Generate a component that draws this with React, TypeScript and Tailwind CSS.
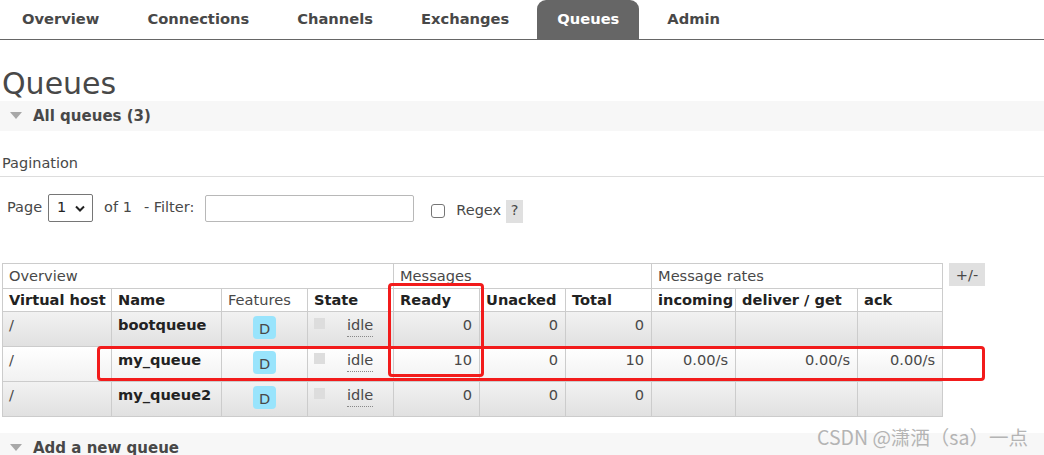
import React from "react";

const font = { fontFamily: '"DejaVu Sans", Verdana, sans-serif' };

function Triangle() {
  return (
    <svg width="12" height="8" viewBox="0 0 12 8" className="shrink-0">
      <polygon points="0,0 12,0 6,7" fill="#a8a8a8" />
    </svg>
  );
}

function SectionHeader({ title }: { title: string }) {
  return (
    <div className="h-[30px] bg-[#f7f7f7] flex items-center pl-[10px] gap-[11px]">
      <Triangle />
      <span className="text-[15px] font-bold text-[#484848]">{title}</span>
    </div>
  );
}

type Row = {
  name: string;
  ready: string;
  unacked: string;
  total: string;
  incoming: string;
  deliver: string;
  ack: string;
  odd: boolean;
};

const rows: Row[] = [
  { name: "bootqueue", ready: "0", unacked: "0", total: "0", incoming: "", deliver: "", ack: "", odd: true },
  { name: "my_queue", ready: "10", unacked: "0", total: "10", incoming: "0.00/s", deliver: "0.00/s", ack: "0.00/s", odd: false },
  { name: "my_queue2", ready: "0", unacked: "0", total: "0", incoming: "", deliver: "", ack: "", odd: true },
];

export default function App() {
  const tabs = ["Overview", "Connections", "Channels", "Exchanges", "Queues", "Admin"];
  const td = "border border-[#cccccc] align-top pt-[2px] h-[35px] px-[6px]";
  const num = td + " text-right pr-[7px]";
  return (
    <div className="relative w-[1044px] h-[455px] overflow-hidden bg-white text-[#484848]" style={font}>
      {/* nav */}
      <div className="flex gap-[8px] pl-[2px] h-[40px] border-b border-[#666666]">
        {tabs.map((t) => (
          <div
            key={t}
            className={
              "px-[20px] h-[39px] flex items-center text-[14.7px] font-bold " +
              (t === "Queues" ? "bg-[#666666] text-white rounded-t-[9px]" : "text-[#484848]")
            }
          >
            {t}
          </div>
        ))}
      </div>

      <h1 className="mt-[27px] h-[34px] leading-[34px] text-[30px] pl-[2px] text-[#484848]">Queues</h1>

      <SectionHeader title="All queues (3)" />

      <div className="pt-[22px] pb-[3px] leading-[20px] text-[14.5px] pl-[2px] border-b border-[#dddddd]">
        Pagination
      </div>

      <div className="mt-[17px] h-[28px] flex items-center text-[14.5px] pl-[7px]">
        <span>Page</span>
        <div className="ml-[6px] w-[45px] h-[28px] border border-[#767676] rounded-[2px] flex items-center pl-[8px] gap-[9px] text-[#222]">
          <span>1</span>
          <svg width="10" height="7" viewBox="0 0 10 7">
            <polyline points="1,1.5 5,5.5 9,1.5" fill="none" stroke="#222" strokeWidth="2" />
          </svg>
        </div>
        <span className="ml-[11px]">of 1</span>
        <span className="ml-[12px]">- Filter:</span>
        <div className="ml-[11px] w-[209px] h-[27px] border border-[#b8b8b8] rounded-[2px]" />
        <div className="flex items-center mt-[6px]">
          <div className="ml-[17px] w-[14px] h-[14px] border border-[#767676] rounded-[3px]" />
          <span className="ml-[11px]">Regex</span>
          <span className="ml-[5px] w-[17px] h-[23px] bg-[#e0e0e0] flex items-center justify-center">?</span>
        </div>
      </div>

      {/* table */}
      <div className="mt-[41px] ml-[2px] flex items-start gap-[6px]">
        <table className="table-fixed border-collapse w-[941px] text-[14.6px]">
          <colgroup>
            <col className="w-[109px]" />
            <col className="w-[110px]" />
            <col className="w-[86px]" />
            <col className="w-[86px]" />
            <col className="w-[86px]" />
            <col className="w-[86px]" />
            <col className="w-[86px]" />
            <col className="w-[84px]" />
            <col className="w-[122px]" />
            <col className="w-[85px]" />
          </colgroup>
          <thead>
            <tr className="h-[25px]">
              <th colSpan={4} className="border border-[#cccccc] text-left font-normal px-[6px] leading-[18px]">Overview</th>
              <th colSpan={3} className="border border-[#cccccc] text-left font-normal px-[6px] leading-[18px]">Messages</th>
              <th colSpan={3} className="border border-[#cccccc] text-left font-normal px-[6px] leading-[18px]">Message rates</th>
            </tr>
            <tr className="h-[23px] text-[#222]">
              {["Virtual host", "Name", "Features", "State", "Ready", "Unacked", "Total", "incoming", "deliver / get", "ack"].map((h) => (
                <th
                  key={h}
                  className={
                    "border border-[#cccccc] text-left px-[6px] leading-[18px] whitespace-nowrap " +
                    (h === "Features" ? "font-normal text-[#484848]" : "font-bold")
                  }
                >
                  {h}
                </th>
              ))}
            </tr>
          </thead>
          <tbody>
            {rows.map((r) => (
              <tr
                key={r.name}
                className={
                  r.odd
                    ? "bg-gradient-to-b from-[#f2f2f2] to-[#e0e0e0]"
                    : "bg-gradient-to-b from-[#ffffff] to-[#f1f1f1]"
                }
              >
                <td className={td}>/</td>
                <td className={td + " font-bold text-[#222]"}>{r.name}</td>
                <td className={td + " pt-[4px]"}>
                  <div className="mx-auto w-[23px] h-[23px] rounded-[4px] bg-[#99e4fc] flex items-center justify-center pt-[2px]">D</div>
                </td>
                <td className={td}>
                  <div className="flex items-start">
                    <div className="mt-[4px] w-[11px] h-[11px] bg-[#dddddd]" />
                    <span className="ml-[22px] border-b border-dotted border-[#888]">idle</span>
                  </div>
                </td>
                <td className={num}>{r.ready}</td>
                <td className={num}>{r.unacked}</td>
                <td className={num}>{r.total}</td>
                <td className={num}>{r.incoming}</td>
                <td className={num}>{r.deliver}</td>
                <td className={num}>{r.ack}</td>
              </tr>
            ))}
          </tbody>
        </table>
        <div className="w-[36px] h-[23px] bg-[#e0e0e0] flex items-center justify-center text-[14.6px]">+/-</div>
      </div>

      <div className="mt-[16px]">
        <SectionHeader title="Add a new queue" />
      </div>

      {/* annotation overlays */}
      <div className="absolute left-[388px] top-[283px] w-[96px] h-[94px] border-[3px] border-[#f21b1b] rounded-[4px]" />
      <div className="absolute left-[97px] top-[346px] w-[888px] h-[35px] border-[3px] border-[#f21b1b] rounded-[4px]" />

      {/* watermark */}
      <div
        className="absolute left-[817px] top-[422px] text-[19.5px] text-[#b4b4b4] whitespace-nowrap"
        style={{ fontFamily: '"Noto Sans CJK SC", "Noto Sans", sans-serif' }}
      >
        CSDN @潇洒（sa）一点
      </div>
    </div>
  );
}
